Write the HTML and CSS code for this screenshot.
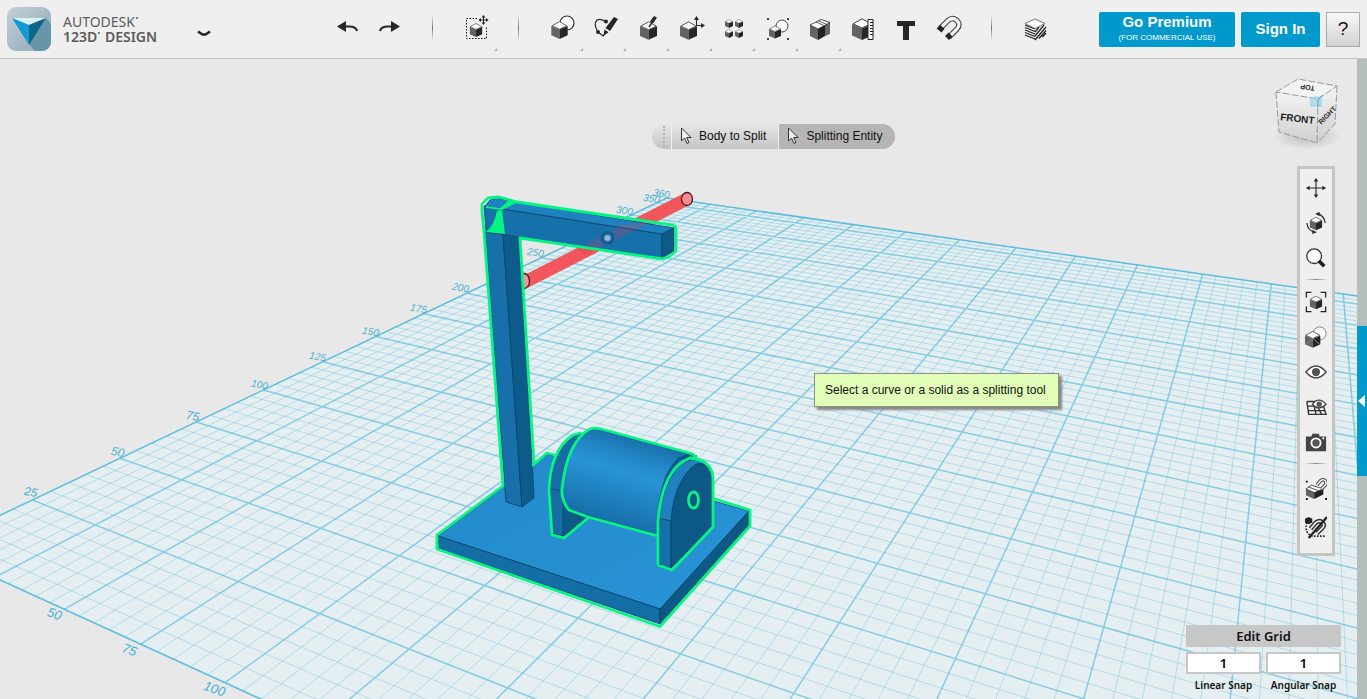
FILE: index.html
```html
<!DOCTYPE html>
<html lang="en">
<head>
<meta charset="utf-8">
<title>Autodesk 123D Design</title>
<link rel="stylesheet" href="styles.css">
</head>
<body>
<svg class="defs" aria-hidden="true">
  <defs>
    <symbol id="cube" viewBox="0 0 20 22">
      <path d="M0 6 10 10.500V22L0 17.500z" fill="#636363"/>
      <path d="M20 6 10 10.500V22l10-4.500z" fill="#262626"/>
      <path d="M10 .8 19 5.800 10 10 1 5.800z" fill="#fff" stroke="#2a2a2a" stroke-width=".9"/>
    </symbol>
    <symbol id="pointer" viewBox="0 0 12 18">
      <path d="M1.500 1v13l3-3 2.500 5.500 2-1-2.300-5H11z" fill="#eee" stroke="#333" stroke-width="1"/>
    </symbol>
  </defs>
</svg>

<header class="topbar">
  <div class="brand">
    <svg class="logo" viewBox="0 0 44 44" aria-hidden="true">
      <defs><linearGradient id="lg" x1="0" y1="0" x2="1" y2="1"><stop offset="0" stop-color="#c3d0d8"/><stop offset="1" stop-color="#8fa8b4"/></linearGradient></defs>
      <rect width="44" height="44" rx="9" fill="url(#lg)"/>
      <path d="M39 11l5 6v18a9 9 0 0 1-9 9h-7l-6-7z" fill="#6796a8"/>
      <path d="M5 11h34L22 18z" fill="#d9f1fb"/>
      <path d="M5 11l17 7v20z" fill="#129bd2"/>
      <path d="M39 11l-17 7v20z" fill="#0b6688"/>
    </svg>
    <div class="brand-name"><span>AUTODESK<i class="dot"></i></span><strong>123D<i class="dot"></i> DESIGN</strong></div>
    <button class="menu" aria-label="Main menu"><svg class="chevron" viewBox="0 0 14 7"><path d="M1 1.500L5.500 4.500h3L13 1.500" fill="none" stroke="#222" stroke-width="2.500"/></svg></button>
  </div>

  <nav class="tools" aria-label="Tools">
    <button class="tool" aria-label="Undo"><svg viewBox="0 0 32 32"><path d="M6 14.500l9-5.500v11z" fill="#262626"/><path d="M13 14.500h5q7 0 8 4.500" fill="none" stroke="#262626" stroke-width="2.200"/></svg></button>
    <button class="tool" aria-label="Redo"><svg viewBox="0 0 32 32"><path d="M26 14.500l-9-5.500v11z" fill="#262626"/><path d="M19 14.500h-5q-7 0-8 4.500" fill="none" stroke="#262626" stroke-width="2.200"/></svg></button>
    <span class="divider"></span>
    <button class="tool more" aria-label="Transform"><svg viewBox="0 0 32 32"><path d="M17 6.500H6.500v20h20V15" fill="none" stroke="#111" stroke-dasharray="1.500 1.500"/><use href="#cube" x="9.500" y="11" width="13" height="14"/><path d="M23.500 4v8M19.500 8h8" stroke="#262626"/><path d="M23.500 3l-2 2.500h4zM23.500 13l-2-2.500h4zM18.500 8l2.500-2v4zM28.500 8l-2.500-2v4z" fill="#262626"/></svg></button>
    <span class="divider"></span>
    <button class="tool more" aria-label="Primitives"><svg viewBox="0 0 32 32"><circle cx="21" cy="11" r="7" fill="#fff" stroke="#333" stroke-width="1.200"/><use href="#cube" x="5" y="9" width="17" height="18"/></svg></button>
    <button class="tool more" aria-label="Sketch"><svg viewBox="0 0 32 32"><path d="M17 10Q12 6 8 8q-4 4 1 12l5 4 4-4" fill="none" stroke="#262626" stroke-width="1.200"/><circle cx="17" cy="9.500" r="2" fill="#262626"/><circle cx="9" cy="20" r="2" fill="#262626"/><path d="M25 5l4 2-8 12-4.500-3zM15.500 17.500l4 2.800-5 3.200z" fill="#262626"/></svg></button>
    <button class="tool more" aria-label="Construct"><svg viewBox="0 0 32 32"><use href="#cube" x="8" y="9" width="17" height="19"/><path d="M17 15l4-6" stroke="#262626" stroke-width="1.500"/><path d="M22 4l3 1.500-4 6-3-2z" fill="#262626"/></svg></button>
    <button class="tool more" aria-label="Modify"><svg viewBox="0 0 32 32"><use href="#cube" x="5" y="9" width="17" height="19"/><path d="M21.500 14V6M21.500 13.500h7" stroke="#262626"/><path d="M21.500 4L19 8h5zM30 13.500l-4-2.500v5z" fill="#262626"/></svg></button>
    <button class="tool more" aria-label="Pattern"><svg viewBox="0 0 32 32"><use href="#cube" x="7" y="7" width="8" height="9"/><use href="#cube" x="17" y="7" width="8" height="9"/><use href="#cube" x="7" y="17" width="8" height="9"/><use href="#cube" x="17" y="17" width="8" height="9"/></svg></button>
    <button class="tool more" aria-label="Grouping"><svg viewBox="0 0 32 32"><circle cx="21" cy="14" r="6" fill="#fff" stroke="#444"/><use href="#cube" x="8" y="13" width="12" height="14"/><path d="M6 6h2v2H6zM26 6h2v2h-2zM6 26h2v2H6zM26 26h2v2h-2z" fill="#444"/></svg></button>
    <button class="tool more" aria-label="Combine"><svg viewBox="0 0 32 32"><path d="M6 13l8 4v11l-8-4z" fill="#636363"/><path d="M14 17l7-4v11l-7 4z" fill="#222"/><path d="M21 13l5-3v12l-5 2z" fill="#666"/><path d="M6 13l11-5.500 9 3L14 17z" fill="#fff" stroke="#222" stroke-width=".8"/><path d="M12 10l8 3.500M14.500 9l8 3.300" fill="none" stroke="#444" stroke-width=".8"/></svg></button>
    <button class="tool" aria-label="Measure"><svg viewBox="0 0 32 32"><use href="#cube" x="5" y="6" width="20" height="22"/><path d="M21 7.500h5v20h-5z" fill="#fff" stroke="#222"/><path d="M23 10.500h3M23 13.500h3M23 16.500h3M23 19.500h3M23 22.500h3" stroke="#222"/></svg></button>
    <button class="tool" aria-label="Text"><svg viewBox="0 0 32 32"><path d="M7 9h18v5h-6v14h-6V14H7z" fill="#262626"/></svg></button>
    <button class="tool" aria-label="Snap"><svg viewBox="0 0 32 32"><path d="M7 16.500l8-8q5-4 9 0t0 8.500L16 25" fill="none" stroke="#444" stroke-width="5.500"/><path d="M7 16.500l8-8q5-4 9 0t0 8.500L16 25" fill="none" stroke="#f4f4f4" stroke-width="3.200"/><path d="M3.500 16.500l4-3.500 4 4-3 3.500zM12 24l3.500-3.500 4 4L16 28z" fill="#262626"/></svg></button>
    <span class="divider"></span>
    <button class="tool" aria-label="Material"><svg viewBox="0 0 32 32"><path d="M6 12l10 4.500L27 12v10l-11 6-10-5z" fill="#f0f0f0"/><path d="M6 13l10 4M6 15.500l10 4M6 18l10 4M6 20.500l10 4M6 23l10 4M16 20l4-5M16 24l9-11M16 28l11-13M20 26.500l7-8M23.500 25l3.500-4" stroke="#222" stroke-width="1.300"/><path d="M16 7l10 4.500-10 5-10-5z" fill="#fff" stroke="#555" stroke-width=".8"/></svg></button>
  </nav>

  <div class="actions">
    <button class="primary premium"><span>Go Premium</span><small>(FOR COMMERCIAL USE)</small></button>
    <button class="primary signin">Sign In</button>
    <button class="help" aria-label="Help">?</button>
  </div>
</header>

<main class="workspace">
  <svg class="scene" viewBox="0 59 1357 640" preserveAspectRatio="xMidYMid slice" role="img" aria-label="3D model on the work plane">
    <defs>
      <linearGradient id="drum" gradientUnits="userSpaceOnUse" x1="638" y1="440" x2="612" y2="528"><stop offset="0" stop-color="#1870aa"/><stop offset=".18" stop-color="#2285c4"/><stop offset=".38" stop-color="#2894d6"/><stop offset=".62" stop-color="#2184c2"/><stop offset="1" stop-color="#156ba5"/></linearGradient>
      <linearGradient id="plate" x1="0" y1="0" x2="1" y2="1"><stop offset="0" stop-color="#238aca"/><stop offset="1" stop-color="#2894d6"/></linearGradient>
    </defs>
    <path id="plane" class="plane"/>
    <path id="minor" class="minor"/>
    <path id="major" class="major"/>
    <path id="rim" class="rim"/>
    <g class="ticks">
      <text transform="translate(30 496) rotate(10)">25</text>
      <text transform="translate(117 456) rotate(10)">50</text>
      <text transform="translate(192 420) rotate(10)">75</text>
      <g class="far">
        <text transform="translate(259 388) rotate(10)">100</text>
        <text transform="translate(317 360) rotate(10)">125</text>
        <text transform="translate(370 335) rotate(10)">150</text>
        <text transform="translate(418 312) rotate(10)">175</text>
        <text transform="translate(460 291) rotate(10)">200</text>
        <text transform="translate(535 256) rotate(8)">250</text>
        <text transform="translate(624 214) rotate(8)">300</text>
        <text transform="translate(651 202) rotate(8)">350</text>
        <text transform="translate(661 197) rotate(8)">360</text>
      </g>
      <g class="near">
        <text transform="translate(53 618) rotate(20)">50</text>
        <text transform="translate(128 654) rotate(20)">75</text>
        <text transform="translate(213 693) rotate(20)">100</text>
      </g>
    </g>

    <path d="M525 282L687 199" stroke="#f0565b" stroke-width="13"/>
    <ellipse cx="687" cy="199" rx="5.500" ry="6.500" fill="#f48d91" stroke="#5b1a20" stroke-width="1.300"/>
    <ellipse cx="524" cy="281" rx="5.500" ry="7.500" fill="#e99a9c" stroke="#4b1a20" stroke-width="1.300"/>

    <g class="edges">
      <path d="M438 536L547 454L749 511L660 609z" fill="url(#plate)"/>
      <path d="M438 536L660 609V624L439 549z" fill="#156da6"/>
      <path d="M660 609L749 511V525L660 624z" fill="#0c5986"/>
      <path d="M485 232L503 234L522 507L506 502z" fill="#1770aa"/>
      <path d="M503 234L520 238L534 498L522 507z" fill="#0c5b8a"/>
      <path d="M484 206L503 209L662 234V258L486 232z" fill="#1671ab"/>
      <path d="M485 206L490 200L498 198L517 202L674 228L662 234L503 209z" fill="#2081c0"/>
      <path d="M662 234L674 228V251L662 258z" fill="#0c5b8a"/>
    </g>
    <path d="M577 249L621 225L650 222L585 256z" fill="#d83c58" opacity=".24"/>
    <circle cx="607.500" cy="238" r="5.500" fill="#4a88b8" stroke="#145d91" stroke-width="3.500"/><circle cx="607.500" cy="238" r="2.800" fill="#91b8d6"/>
    <path class="mark" d="M486 208L502 210L518 202L510 199.500L500 208L486 206zM497 211L502 210L505 234L486 232Q494 226 497 211z"/>
    <path class="glow" d="M534 464L520 238L663 259L670 256L676 251V227L672 225L517 202L499 197L488 198L482 204V211L484 232L503 486L437 535V549L660 626.500L750 526V510L715 499M533 465L547 453L555 455"/>

    <g class="edges">
      <path d="M550 490Q550 447 575 435L596 430L580 510L588 518L564 536L552 533z" fill="#176ca4"/>
      <path d="M563 491V536L588 518L568 509z" fill="#0c5a87"/>
      <path d="M550 489L563 491"/>
      <path d="M595 428L697 456Q667 473 659 516V536L582 514L568 509Q561 500 562 487Q567 440 595 428z" fill="url(#drum)"/>
      <path d="M671 568L659 565V517Q664 477 683 463Q701 454 710 472z" fill="#2180be"/>
      <path d="M659 518L671 521V568L659 565z" fill="#1770aa"/>
      <path d="M671 568V521Q674 480 696 464Q712 461 713 479V526z" fill="#0c5985"/>
      <path d="M659 516Q661 476 679 459L690 455" stroke="#0b5683" stroke-width="3" fill="none"/>
    </g>
    <path class="glow" d="M588 518L564 538L552 535L549 491Q550 450 573 435L580 433M658 536L588 517L569 510Q561 500 562 489Q567 442 590 429Q595 427 605 430L693 454L697 459M658 565V521Q662 474 684 461L690 458Q712 460 713 478V527L672 570z"/>
    <ellipse class="glow" cx="693.500" cy="500" rx="5" ry="8"/>
  </svg>

  <div class="steps" role="toolbar" aria-label="Split solid">
    <span class="grip"></span>
    <button><svg viewBox="0 0 12 18"><use href="#pointer"/></svg>Body to Split</button>
    <button class="active"><svg viewBox="0 0 12 18"><use href="#pointer"/></svg>Splitting Entity</button>
  </div>

  <div class="hint" role="tooltip">Select a curve or a solid as a splitting tool</div>

  <svg class="viewcube" viewBox="0 0 72 80" role="img" aria-label="View cube">
    <defs><linearGradient id="vf" x1="0" y1="0" x2="0" y2="1"><stop offset="0" stop-color="#f4f4f4"/><stop offset="1" stop-color="#cfcfcf"/></linearGradient><radialGradient id="vs"><stop offset="0" stop-color="#bbb"/><stop offset="1" stop-color="#bbb" stop-opacity="0"/></radialGradient></defs>
    <ellipse cx="37" cy="64" rx="34" ry="14" fill="url(#vs)"/>
    <path d="M6 20L28 7L67 14L48 27z" fill="#f3f3f3"/>
    <path d="M6 20L48 27L47 71L9 60z" fill="url(#vf)"/>
    <path d="M48 27L67 14L65 52L47 71z" fill="url(#vf)"/>
    <path d="M6 20L28 7L67 14L48 27zM6 20L9 60L47 71L48 27M67 14L65 52L47 71" fill="none" stroke="#999" stroke-dasharray="7 2"/>
    <path d="M40 26l6-2 6 1v10H40z" fill="#91d3ec" opacity=".65"/>
    <path d="M48 35V27L53 23" fill="none" stroke="#739fae"/>
    <text class="front" transform="translate(27 50) rotate(6)">FRONT</text>
    <text class="side" transform="translate(59 45) rotate(-45)">RIGHT</text>
    <text class="side" transform="translate(38 13) rotate(188)">TOP</text>
  </svg>

  <nav class="viewbar" aria-label="Navigation">
    <button aria-label="Pan"><svg viewBox="0 0 24 24"><path d="M12 4v16M4 12h16" stroke="#262626" stroke-width="1.200"/><path d="M12 1l-2.500 4h5zM12 23l-2.500-4h5zM1 12l4-2.500v5zM23 12l-4-2.500v5z" fill="#262626"/></svg></button>
    <button aria-label="Orbit"><svg viewBox="0 0 24 24"><use href="#cube" x="5" y="5" width="14" height="15"/><path d="M14 2q7 2 8 10M10 22q-7-2-8-10" fill="none" stroke="#262626" stroke-width="1.300"/><path d="M11 2l5-2v4.500zM13 22l-5 2v-4.500z" fill="#262626"/></svg></button>
    <button aria-label="Zoom"><svg viewBox="0 0 24 24"><circle cx="10" cy="10" r="8" fill="#fff" stroke="#333" stroke-width="1.400"/><path d="M15 15l6 6" stroke="#222" stroke-width="4"/></svg></button>
    <span class="rule"></span>
    <button aria-label="Fit"><svg viewBox="0 0 24 24"><use href="#cube" x="5" y="5" width="14" height="15"/><path d="M1.500 7V1.500H7M17 1.500h5.500V7M22.500 17v5.500H17M7 22.500H1.500V17" fill="none" stroke="#222" stroke-width="1.400"/></svg></button>
    <button aria-label="Shading"><svg viewBox="0 0 24 24"><circle cx="16" cy="8" r="7" fill="#fff" stroke="#777"/><use href="#cube" x="0" y="5" width="17" height="19"/><path d="M1 20L9 14l7 6" stroke="#888" fill="none"/></svg></button>
    <button aria-label="Visibility"><svg viewBox="0 0 24 24"><path d="M1 12Q12-1 23 12Q12 25 1 12z" fill="#fff" stroke="#444" stroke-width="1.500"/><circle cx="12" cy="12" r="4.500" fill="#555"/></svg></button>
    <button aria-label="Grid visibility"><svg viewBox="0 0 24 24"><path d="M2 6h9M2 11h19M3 16h19M2 6l2 14h19l-3-9M9 6l3 14M14 12l4 8" fill="none" stroke="#333" stroke-width="1.500"/><path d="M8 9Q15 0 23 9Q15 17 8 9z" fill="#fff" stroke="#444" stroke-width="1.300"/><circle cx="15.500" cy="9" r="3" fill="#555"/></svg></button>
    <button aria-label="Screenshot"><svg viewBox="0 0 24 24"><path d="M1 6h6l1-3h7l1 3h7v16H1z" fill="#444"/><circle cx="12" cy="13" r="5" fill="#555" stroke="#fff" stroke-width="2"/><path d="M19 7h2v2h-2z" fill="#fff"/></svg></button>
    <span class="rule"></span>
    <button class="tall" aria-label="Snap to faces"><svg viewBox="0 0 24 26"><path d="M1 14l9 4v7l-9-4z" fill="#636363"/><path d="M10 18l10-4v6l-10 5z" fill="#222"/><path d="M1 14l6-4 13 4-10 4z" fill="#fff" stroke="#222" stroke-width=".8"/><path d="M4 12l11 4" stroke="#222" stroke-width=".8"/><path d="M13 10l4-5q3-2 5 0t0 5l-4 4" fill="none" stroke="#444" stroke-width="3.800"/><path d="M13 10l4-5q3-2 5 0t0 5l-4 4" fill="none" stroke="#eee" stroke-width="1.800"/><path d="M1 5h2v2H1zM1 24h2v2H1zM22 24h2v2h-2z" fill="#111"/></svg></button>
    <button class="tall" aria-label="Disable snapping"><svg viewBox="0 0 24 26"><path d="M6 15l6-7q4-3 7 0t0 6l-6 6" fill="none" stroke="#333" stroke-width="5"/><path d="M6 15l6-7q4-3 7 0t0 6l-6 6" fill="none" stroke="#eee" stroke-width="1.800"/><path d="M2 8q-3 12 6 15h14" fill="none" stroke="#222" stroke-width="1.800" stroke-dasharray="1.800 1.500"/><path d="M0 4l4-2 4 2v4l-4 2-4-2z" fill="#222"/><path d="M4 25L24 2" stroke="#222" stroke-width="2.500"/></svg></button>
  </nav>

  <form class="snap">
    <button type="button" class="edit-grid">Edit Grid</button>
    <div class="field"><input id="linear" value="1"><label for="linear">Linear Snap</label></div>
    <div class="field"><input id="angular" value="1"><label for="angular">Angular Snap</label></div>
  </form>

  <aside class="drawer"><button aria-label="Open panel"><svg viewBox="0 0 10 14"><path d="M8 1v12L1 7z" fill="#fff"/></svg></button></aside>
</main>
<script src="scene.js"></script>
</body>
</html>
```

FILE: styles.css
```css
* { box-sizing: border-box; }
body {
  margin: 0;
  height: 100vh;
  display: flex;
  flex-direction: column;
  overflow: hidden;
  background: #e8e8e8;
  font-family: "Liberation Sans", Arial, sans-serif;
  font-size: 12px;
  color: #111;
}
button { padding: 0; border: 0; background: none; font: inherit; color: inherit; }
svg { display: block; }
.defs { position: absolute; width: 0; height: 0; }

.topbar {
  display: flex;
  align-items: center;
  padding: 0 7px;
  height: 59px;
  flex: none;
  background: #efefef;
  border-bottom: 1px solid #c4c4c4;
}
.brand { display: flex; align-items: center; width: 318px; flex: none; }
.logo { width: 44px; height: 44px; }
.brand-name {
  display: flex;
  flex-direction: column;
  width: 144px;
  padding-left: 12px;
  font-family: "Noto Sans", sans-serif;
  font-size: 14px;
  line-height: 15px;
  color: #5c5c5c;
}
.brand-name strong { font-weight: 600; }
.dot {
  display: inline-block;
  width: 2px;
  height: 2px;
  margin: 0 1px;
  border-radius: 1px;
  vertical-align: 8px;
  background: #5c5c5c;
}
.chevron { width: 14px; height: 7px; }
.menu { padding: 8px 2px 0; }

.tools { display: flex; flex: none; margin-bottom: 3px; }
.tool, .divider { width: 43px; height: 50px; display: flex; align-items: center; justify-content: center; }
.tool { position: relative; }
.tool svg { width: 32px; height: 32px; }
.more::after {
  content: "";
  position: absolute;
  right: 0;
  bottom: 2px;
  border-left: 3px solid transparent;
  border-bottom: 3px solid #aaa;
}
.divider::before {
  content: "";
  width: 1px;
  height: 26px;
  background: linear-gradient(transparent, #777, transparent);
}

.actions { display: flex; gap: 6px; margin-left: auto; }
.primary { height: 35px; border-radius: 2px; background: #0099cc; color: #fff; font-weight: bold; }
.premium { width: 136px; font-size: 15px; line-height: 18px; }
.premium span, .premium small { display: block; }
.premium small { font-size: 8px; line-height: 14px; font-weight: normal; }
.signin { width: 79px; font-size: 15px; padding-bottom: 2px; }
.help { width: 34px; height: 35px; border: 1px solid #aaa; background: linear-gradient(#f8f8f8, #d2d2d2); font-size: 19px; }

.workspace { position: relative; flex: 1; min-height: 0; }
.scene { position: absolute; inset: 0; width: 100%; height: 100%; padding-right: 10px; }
.plane { fill: #e5eef0; }
.minor, .major, .rim { fill: none; stroke: #42b4da; }
.minor { stroke-width: 1; opacity: .3; }
.major { stroke-width: 1.500; opacity: .58; }
.rim { stroke-width: 1.500; opacity: .85; }
.ticks { fill: #45b0d4; font-size: 12px; font-style: italic; text-anchor: middle; }
.far { font-size: 10px; }
.near { font-size: 13px; }
.edges { stroke: #0a4268; stroke-width: .8; stroke-linejoin: round; }
.glow { fill: none; stroke: #05f584; stroke-width: 2.800; stroke-linejoin: round; stroke-linecap: round; }
.mark { fill: #05f584; }

.steps {
  position: absolute;
  left: 652px;
  top: 65px;
  display: flex;
  height: 25px;
  border-radius: 13px;
  overflow: hidden;
  background: linear-gradient(#e6e6e6, #c4c4c4);
}
.steps button { display: flex; align-items: center; gap: 7px; padding: 0 12px 2px 8px; border-left: 1px solid #f0f0f0; }
.steps .active { background: #b5b5b5; padding-right: 13px; }
.steps svg { width: 12px; height: 18px; }
.grip { width: 19px; display: flex; align-items: center; justify-content: flex-end; padding-right: 6px; }
.grip::before { content: ""; height: 21px; border-left: 2px dotted #b4b4b4; }

.hint {
  position: absolute;
  left: 814px;
  top: 314px;
  padding: 9px 12px 8px 10px;
  border: 1px solid #8c9480;
  background: #e1ffb9;
  box-shadow: 3px 3px 2px #888;
  line-height: 15px;
}

.viewcube { position: absolute; top: 13px; right: 25px; width: 72px; height: 80px; }
.viewcube text { text-anchor: middle; font-weight: bold; fill: #222; }
.viewcube .front { font-size: 10px; }
.viewcube .side { font-size: 7px; }

.viewbar {
  position: absolute;
  top: 107px;
  right: 32px;
  display: flex;
  flex-direction: column;
  align-items: center;
  width: 38px;
  padding: 1px 0 7px;
  border: 3px solid #c5c5c5;
  background: #efefef;
}
.viewbar button { height: 35px; display: flex; align-items: center; }
.viewbar .tall { height: 39px; }
.viewbar svg { width: 22px; height: 24px; }
.rule { width: 24px; height: 1px; margin: 4px 0; background: linear-gradient(90deg, transparent, #888, transparent); }

.snap {
  position: absolute;
  right: 26px;
  bottom: 8px;
  display: grid;
  grid-template-columns: 75px 75px;
  gap: 5px;
  font-family: "Noto Sans", sans-serif;
  font-weight: 600;
}
.edit-grid { grid-column: 1 / -1; height: 22px; background: #c7c7c7; font-size: 13px; }
.field { display: flex; flex-direction: column; align-items: center; }
.field input {
  width: 100%;
  height: 22px;
  border: 2px solid #c7c7c7;
  border-radius: 0;
  background: #fff;
  text-align: center;
  font: inherit;
  font-size: 13px;
}
.field label { font-size: 10px; line-height: 12px; padding-top: 5px; }

.drawer {
  position: absolute;
  inset: 0 0 0 auto;
  width: 10px;
  padding-top: 267px;
  background: #b6bebc;
}
.drawer button { width: 10px; height: 150px; display: flex; align-items: center; background: #0099cc; }
.drawer svg { width: 10px; height: 14px; }
```

FILE: scene.js
```js
// Perspective projection of the work plane: u runs up the left rim, v along the front rim.
const SIZE_U = 360;
const SIZE_V = 400;

function project(u, v) {
  const w = 1 + 0.003178 * u - 0.001693 * v;
  const x = (4.1627 * u + 2.561 * v - 69.2) / w;
  const y = (-0.343 * u + 0.188 * v + 548.3) / w;
  return x.toFixed(1) + " " + y.toFixed(1);
}

function segment(u1, v1, u2, v2) {
  return "M" + project(u1, v1) + "L" + project(u2, v2);
}

let minor = "";
let major = "";
for (let u = 5; u < SIZE_U; u += 5) {
  const line = segment(u, 0, u, SIZE_V);
  if (u % 25) minor += line; else major += line;
}
for (let v = 5; v < SIZE_V; v += 5) {
  const line = segment(0, v, SIZE_U, v);
  if (v % 25) minor += line; else major += line;
}

const rim = "M" + [project(0, SIZE_V), project(0, 0), project(SIZE_U, 0), project(SIZE_U, SIZE_V)].join("L");
document.getElementById("plane").setAttribute("d", rim + "z");
document.getElementById("rim").setAttribute("d", rim);
document.getElementById("minor").setAttribute("d", minor);
document.getElementById("major").setAttribute("d", major);
```
